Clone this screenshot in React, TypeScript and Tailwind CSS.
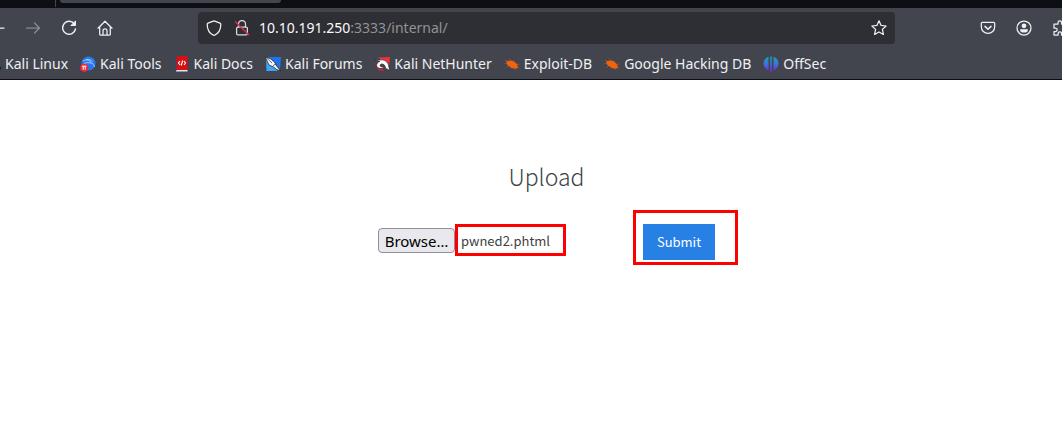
import { useRef, useState } from 'react';
import type { ReactNode } from 'react';

const ToolIcon = ({ children, className = 'h-4 w-4' }: { children: ReactNode; className?: string }) => (
  <svg
    viewBox="0 0 16 16"
    className={className}
    fill="none"
    stroke="currentColor"
    strokeWidth="1.25"
    strokeLinecap="round"
    strokeLinejoin="round"
    aria-hidden="true"
  >
    {children}
  </svg>
);

const ToolButton = ({ label, disabled, children }: { label: string; disabled?: boolean; children: ReactNode }) => (
  <button
    type="button"
    aria-label={label}
    disabled={disabled}
    className="flex h-8 w-9 shrink-0 items-center justify-center text-[#f0f0f2] disabled:text-[#8a8b91]"
  >
    <ToolIcon>{children}</ToolIcon>
  </button>
);

const Bug = () => (
  <svg viewBox="0 0 16 16" className="h-4 w-4" aria-hidden="true">
    <path
      d="M1 4l3 2M.5 7.500h3M2.500 11.500l2-1.500M5 2.500l1.500 2M9 4l1 1.500M15.500 8l-2.500.5M15.500 12l-2.500-.5M12 14l-.5-2M8 13l-.5-2"
      stroke="#a5542c"
      strokeWidth=".8"
      fill="none"
    />
    <path d="M2.200 5.200L7 4.600l3.500 1.200L13 8.300l1 3.500-3.200.9-4-1.200L3.300 9z" fill="#f0640f" />
  </svg>
);

const bookmarks: { name: string; icon: ReactNode }[] = [
  {
    name: 'Kali Linux',
    icon: (
      <svg viewBox="0 0 16 16" className="h-4 w-4" aria-hidden="true">
        <path d="M2 4c5-1 9 1 10 4 2 1 4 2 4 6-2-4-6-4-8-6S4 5 2 4z" fill="#0c0c0d" />
      </svg>
    ),
  },
  {
    name: 'Kali Tools',
    icon: (
      <svg viewBox="0 0 16 16" className="h-4 w-4" aria-hidden="true">
        <circle cx="8.500" cy="7.500" r="7" fill="#2878f0" />
        <path
          d="M3 5c4-2 7-1 8 2 2 0 3 2 3.500 4M4 7.500c3-1.500 5-.5 7-.5M6 3.500c3-.5 5 .5 6.500 2"
          stroke="#a9d0ff"
          strokeWidth=".9"
          fill="none"
        />
        <circle cx="4.200" cy="11.800" r="4" fill="#ee2b35" />
        <path d="M2 10.200h4.400M3.200 10.200v3.500M5.200 10.200v3.500" stroke="#fff" strokeWidth="1" fill="none" />
      </svg>
    ),
  },
  {
    name: 'Kali Docs',
    icon: (
      <svg viewBox="0 0 16 16" className="h-4 w-4" aria-hidden="true">
        <path d="M1.500 1.500L3 .5v14H14v1H1.500z" fill="#1a4a91" />
        <path d="M2.500 0h11v14h-11z" fill="#d80f13" />
        <path d="M2.500 14h11v1.500H2z" fill="#e4e4e6" />
        <path d="M6 5L4.500 7 6 9M10 5l1.500 2L10 9M8.700 4.500l-1.500 5" stroke="#fff" strokeWidth="1.100" fill="none" />
      </svg>
    ),
  },
  {
    name: 'Kali Forums',
    icon: (
      <svg viewBox="0 0 16 16" className="h-4 w-4" aria-hidden="true">
        <path d="M2 1h14l-1 12z" fill="#1976ef" />
        <path d="M1 3l12 12H1.500z" fill="#38a7fb" />
        <path d="M0 .8l5.500 2 4 3.200 2.500 4.500 4 4.500-4.500-1.500-3-2.500-4.500-2z" fill="#f6f6f4" stroke="#24272c" strokeWidth=".8" />
        <path d="M1 1.500l6 5.500M8 9.500l3.500-1.500" stroke="#24272c" strokeWidth=".7" fill="none" />
      </svg>
    ),
  },
  {
    name: 'Kali NetHunter',
    icon: (
      <svg viewBox="0 0 16 16" className="h-4 w-4" aria-hidden="true">
        <path d="M4 1.500L16 1l-1 10z" fill="#ee3038" />
        <path d="M.8 7l3.700 7.500 6 .5L6 9z" fill="#c91f3c" />
        <path
          d="M.5 3.500L6 4c4.500-.8 8 2 8.500 5.500l1.300 5-4.300-2.300C11.300 9 9.500 7.800 7.500 8c-1.700.2-2 2.200-.5 2.700l3 .3c-1.200 2.200-6.800 2-7.300-1.200C2.400 7.500 4 6 6 5.500z"
          fill="#fff"
          stroke="#28292d"
          strokeWidth=".7"
        />
      </svg>
    ),
  },
  { name: 'Exploit-DB', icon: <Bug /> },
  { name: 'Google Hacking DB', icon: <Bug /> },
  {
    name: 'OffSec',
    icon: (
      <svg viewBox="0 0 16 16" className="h-4 w-4" aria-hidden="true">
        <defs>
          <linearGradient id="offsec" x1="0" y1="0" x2="0" y2="1">
            <stop offset="0" stopColor="#14a5b5" />
            <stop offset=".5" stopColor="#3f70dc" />
            <stop offset="1" stopColor="#7424d8" />
          </linearGradient>
        </defs>
        <path
          d="M5.500.8v13.500C2.500 13.200.5 10.700.5 7.500S2.500 1.800 5.500.8zM7.200 .5h1.600V16H7.200zM10.500.8c3 1 5 3.500 5 6.700s-2 5.700-5 6.800z"
          fill="url(#offsec)"
        />
      </svg>
    ),
  },
];

const AddressField = () => {
  const [address, setAddress] = useState('10.10.191.250:3333/internal/');
  const [, host, rest] = address.match(/^([^:/]*)(.*)$/) ?? ['', address, ''];

  return (
    <div className="relative ml-[9px] flex h-8 min-w-0 flex-1 items-center text-sm">
      <div aria-hidden="true" className="truncate text-[#929296]">
        <span className="text-[#fbfbfe]">{host}</span>
        {rest}
      </div>
      <input
        type="text"
        aria-label="Address"
        value={address}
        onChange={(e) => setAddress(e.target.value)}
        className="absolute inset-0 w-full bg-transparent text-transparent caret-white outline-none"
      />
    </div>
  );
};

const BrowserChrome = () => (
  <header className="overflow-hidden border-b border-[#0c0c12] bg-[#42454e] font-['Noto_Sans',sans-serif] text-[#f0f0f2]">
    <div className="flex h-2 items-start bg-[#0e0f14]">
      <div className="h-[7px] w-14 border-r border-[#42454e]" />
      <div className="ml-1 h-[3px] w-[221px] rounded-b bg-[#42454e]" />
    </div>
    <nav aria-label="Navigation" className="-mr-4 -ml-[21px] flex h-10 items-center">
      <ToolButton label="Back">
        <path d="M15 8H1.500M7 2.500L1.500 8 7 13.500" />
      </ToolButton>
      <ToolButton label="Forward" disabled>
        <path d="M1.500 8h13M9.500 3l5 5-5 5" />
      </ToolButton>
      <ToolButton label="Reload">
        <path d="M13.600 4.300A6.500 6.500 0 1 0 14.500 9" strokeWidth="1.400" />
        <path d="M14.500 1.300v4.200h-4.200z" fill="currentColor" strokeWidth="1" />
      </ToolButton>
      <ToolButton label="Home">
        <path d="M1 8.200L8 1.200l7 7M2.700 7v7.300q0 .7.700.7h9.200q.7 0 .7-.7V7M6 15v-4.200a2 2 0 0 1 4 0V15" />
      </ToolButton>
      <div className="mx-[75px] flex h-8 min-w-0 flex-1 items-center rounded bg-[#2e2f35] px-2">
        <ToolIcon>
          <path d="M8 .8l6 2.400q.8.300.8 1.200C14.800 9.500 12.500 13.500 8 15.500 3.500 13.500 1.200 9.500 1.200 4.400q0-.9.800-1.200z" />
        </ToolIcon>
        <svg viewBox="0 0 16 16" className="ml-3 h-4 w-4 shrink-0" fill="none" stroke="#dadadd" strokeWidth="1.250" aria-hidden="true">
          <path d="M4.500 7V4a3.500 3.500 0 0 1 7 0v3" />
          <rect x="2.600" y="7" width="10.800" height="7.800" rx="1.300" />
          <path d="M1 1.500l14 13.500" stroke="#e22850" strokeWidth="1.400" />
        </svg>
        <AddressField />
        <button type="button" aria-label="Bookmark this page">
          <ToolIcon>
            <path d="M8 .8l2.100 4.600 5 .6-3.700 3.400 1 5.100L8 12l-4.400 2.500 1-5.100L.9 6l5-.6z" />
          </ToolIcon>
        </button>
      </div>
      <ToolButton label="Save to Pocket">
        <path d="M2.200 2.300h11.600q.9 0 .9.900v3.500a6.700 6.700 0 0 1-13.400 0V3.200q0-.9.900-.9z" />
        <path d="M5 6.400l3 2.900 3-2.900" strokeWidth="1.500" />
      </ToolButton>
      <ToolButton label="Account">
        <circle cx="8" cy="8" r="7" />
        <circle cx="8" cy="5.800" r="2.400" fill="currentColor" stroke="none" />
        <path d="M4.200 9.300h7.600v.7a3.800 2.600 0 0 1-7.600 0z" fill="currentColor" stroke="none" />
      </ToolButton>
      <ToolButton label="Extensions">
        <path d="M6 4V2.700a1.800 1.800 0 0 1 3.600 0V4h4v11H9.500v-1.500a1.700 1.700 0 0 0-3.400 0V15H2v-3.500h1.500a1.700 1.700 0 0 0 0-3.400H2V4z" />
      </ToolButton>
    </nav>
    <ul className="-ml-[15px] flex h-[31px] items-center gap-3 text-sm whitespace-nowrap">
      {bookmarks.map((b) => (
        <li key={b.name}>
          <a href="#" className="flex items-center gap-1">
            {b.icon}
            {b.name}
          </a>
        </li>
      ))}
    </ul>
  </header>
);

const UploadForm = () => {
  const picker = useRef<HTMLInputElement>(null);
  const [fileName, setFileName] = useState('pwned2.phtml');

  return (
    <main className="flex flex-col items-center pt-[76px] pl-[31px] font-['Noto_Sans_CJK_SC',sans-serif] text-[#3c3f43]">
      <h1 className="text-[23px] leading-10 font-light">Upload</h1>
      <form className="mt-7 flex items-start" onSubmit={(e) => e.preventDefault()}>
        <input
          ref={picker}
          type="file"
          aria-label="File to upload"
          className="hidden"
          onChange={(e) => setFileName(e.target.files?.[0]?.name ?? '')}
        />
        <div className="flex w-[265px] items-center pt-1">
          <button
            type="button"
            onClick={() => picker.current?.click()}
            className="flex h-[25px] w-[77px] items-center justify-center rounded border border-[#8f8f9d] bg-[#e9e9ed] font-['Noto_Sans',sans-serif] text-[15px] leading-5 text-black"
          >
            Browse…
          </button>
          <div className="relative flex h-[25px] items-center pl-1.5 text-[13px]">
            {fileName}
            <div className="pointer-events-none absolute -top-1 left-0 h-8 w-[111px] border-3 border-[#ff0000]" />
          </div>
        </div>
        <div className="relative">
          <button type="submit" className="h-9 w-[72px] bg-[#2780e3] text-[13px] text-white">
            Submit
          </button>
          <div className="pointer-events-none absolute -top-[14px] -left-[10px] h-[55px] w-[105px] border-3 border-[#ff0000]" />
        </div>
      </form>
    </main>
  );
};

export default function App() {
  return (
    <div className="min-h-screen bg-white">
      <BrowserChrome />
      <UploadForm />
    </div>
  );
}
